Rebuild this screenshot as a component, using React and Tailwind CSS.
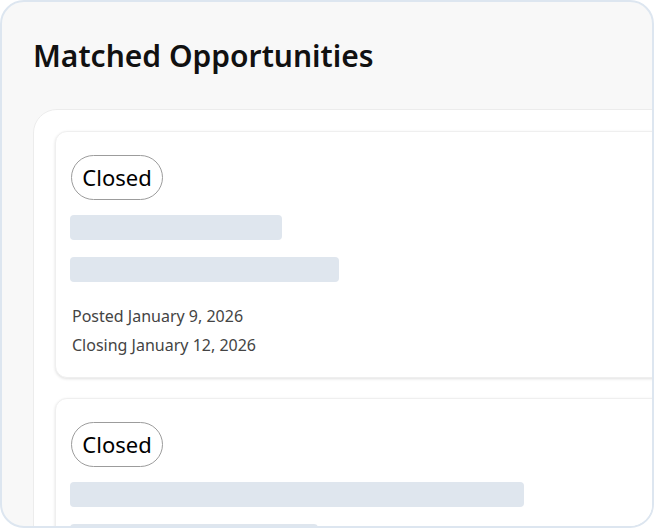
import React from 'react';

const FONT = { fontFamily: '"Noto Sans", "Open Sans", sans-serif' };

const cards = [
    { bars: [212, 269], posted: 'January 9, 2026', closing: 'January 12, 2026' },
    { bars: [454, 248], posted: 'January 9, 2026', closing: 'January 12, 2026' },
];

const OpportunityCard = ({ card }) => (
    <div className="w-[700px] shrink-0 rounded-[12px] border border-[#efefef] bg-white px-[14px] pt-[23px] pb-[17px] shadow-[0_1px_3px_rgba(0,0,0,0.12)]">
        <div className="ml-[1px] flex h-[45px] w-[92px] items-center justify-center rounded-full border border-[#9c9c9c] text-[22px] text-black">
            Closed
        </div>
        <div className="mt-[15px] h-[25px] rounded-[4px] bg-[#dfe6ee]" style={{ width: card.bars[0] }} />
        <div className="mt-[17px] h-[25px] rounded-[4px] bg-[#dfe6ee]" style={{ width: card.bars[1] }} />
        <div className="mt-[20px] pl-[2px] text-[16px] leading-[29px] text-[#444]">
            <p>Posted {card.posted}</p>
            <p>Closing {card.closing}</p>
        </div>
    </div>
);

export default function App() {
    return (
        <div className="h-[528px] w-[654px] bg-white" style={FONT}>
            <div className="flex h-full w-full flex-col overflow-hidden rounded-[24px] border-2 border-[#dde6f0] bg-[#f8f8f8]">
                <h1 className="pl-[31px] pt-[34px] text-[30px] font-semibold leading-[40px] text-[#111]">
                    Matched Opportunities
                </h1>
                <div className="ml-[31px] mt-[33px] flex w-[760px] shrink-0 flex-col gap-[20px] rounded-tl-[24px] border border-[#ececec] bg-white p-[21px]">
                    {cards.map((c, i) => (
                        <OpportunityCard key={i} card={c} />
                    ))}
                </div>
            </div>
        </div>
    );
}
